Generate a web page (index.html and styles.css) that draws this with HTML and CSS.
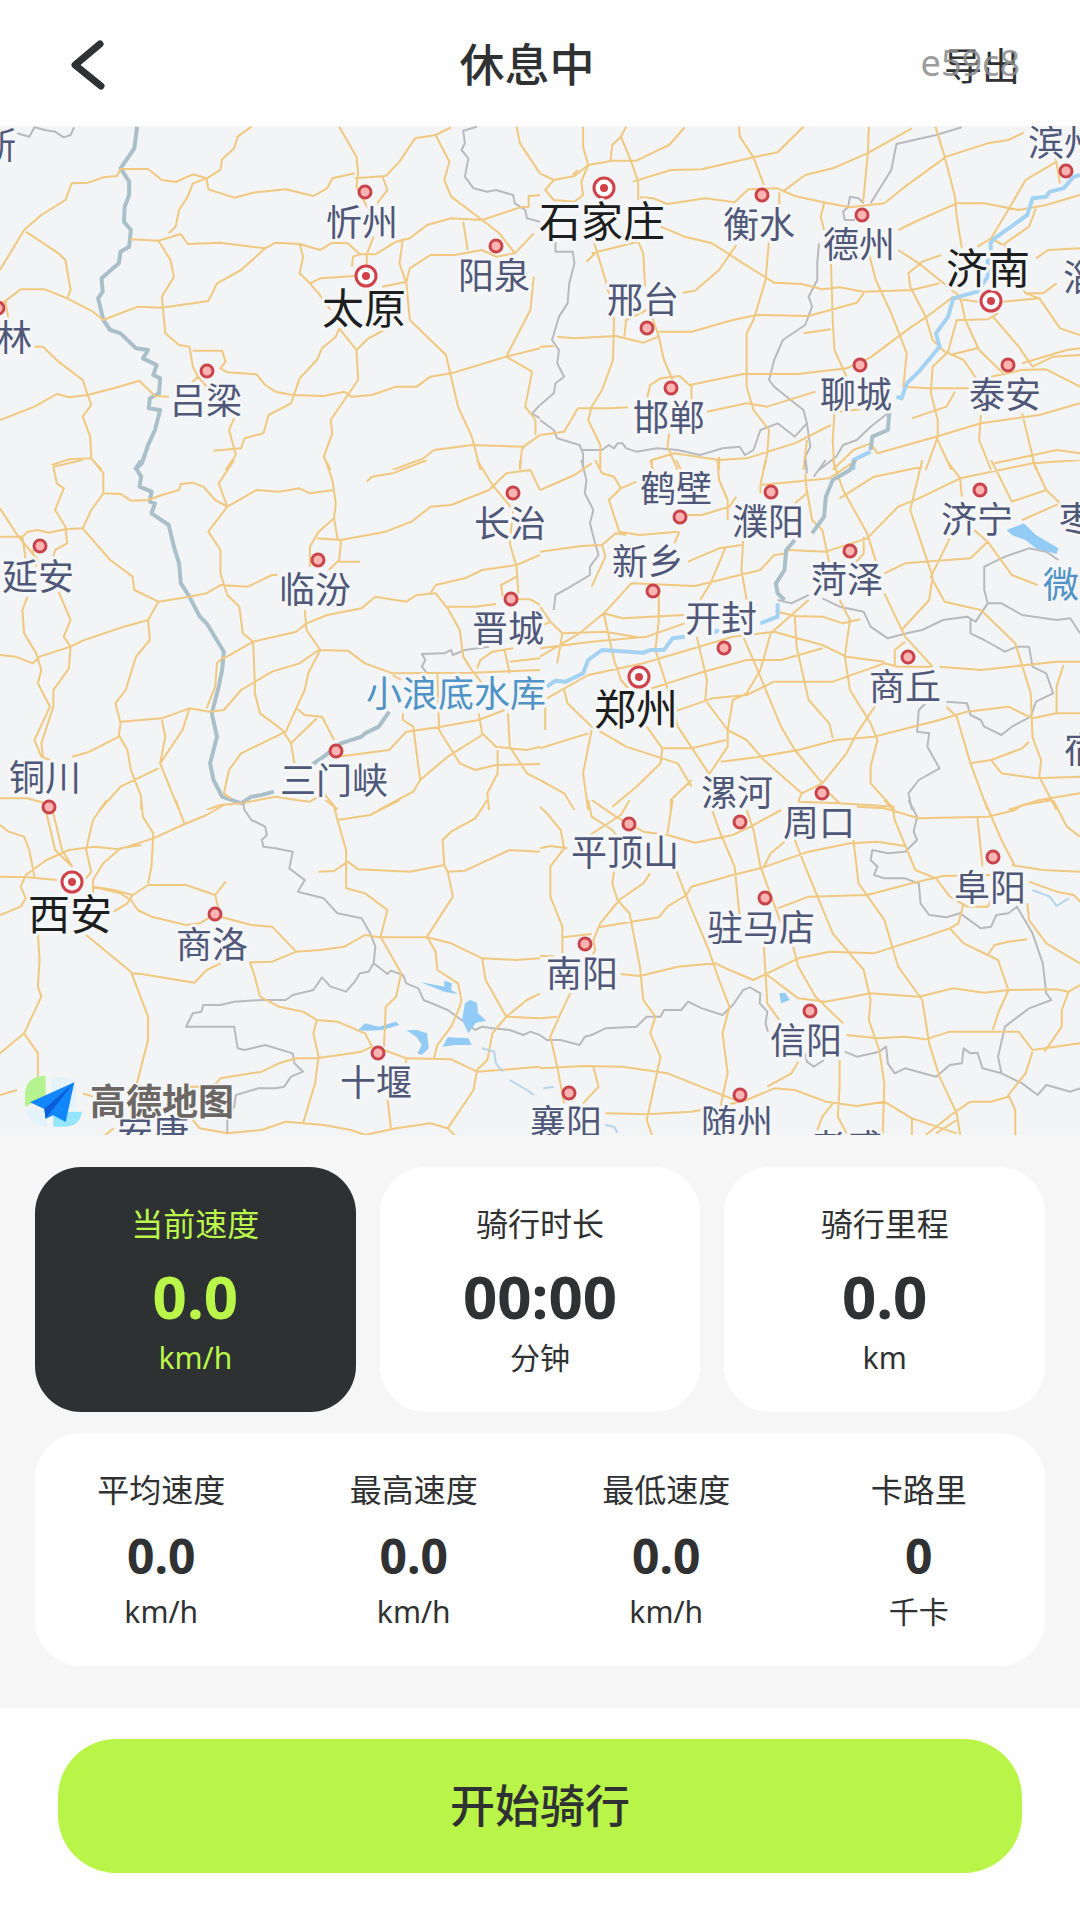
FILE: index.html
```html
<!DOCTYPE html>
<html lang="zh-CN">
<head>
    <meta charset="UTF-8">
    <meta name="viewport" content="width=device-width, initial-scale=1.0">
    <title>休息中</title>
    <link rel="stylesheet" href="styles.css">
</head>
<body>
    <div class="app">
        <!-- 顶部栏 -->
        <header class="top-bar">
            <button class="back-button" type="button" aria-label="返回">
                <svg class="back-icon" viewBox="0 0 40 56" aria-hidden="true">
                    <path d="M34 7 9 28 35 49"/>
                </svg>
            </button>
            <h1 class="title">休息中</h1>
            <div class="export">
                <button class="export-button" type="button">导出</button>
                <span class="export-mark">e59c8</span>
            </div>
        </header>

        <!-- 地图 -->
        <main>
            <svg class="map" viewBox="0 126 1080 1009" role="img" aria-label="地图">
                <rect class="land" x="0" y="126" width="1080" height="1009"/>

                <!-- 西北 -->
                <svg x="0" y="120" width="540" height="350" viewBox="0 0 1568 1050" preserveAspectRatio="none">
                    <path class="border" d="M50 40 85 50 100 22 130 30 160 35 185 52 205 45 215 22M1385 20 1345 32 1350 70 1340 90 1360 115 1350 170 1375 205 1415 215 1440 210 1490 225 1495 250 1525 270 1530 295 1568 305M1568 855 1545 880 1568 895"/>
                    <path class="river-dim" d="M398 20 390 85 350 145 375 185 375 225 362 260 360 305 380 330 375 380 350 395 345 430 295 475 298 515 285 535 300 600 320 630 350 640 395 685 430 690 415 715 455 735 445 765 465 775 462 820 435 835 432 865 465 870 450 930 430 975 412 1030 390 1050"/>
                    <path class="road" d="M0 450 70 330 120 285 190 240 208 190 255 188 300 172 340 168 350 147 430 147 470 180 510 186 560 163 600 175 640 150 645 118 680 85 690 50 730 20
                        M600 175 605 208 680 233 735 218 830 208 910 228 950 205 965 175 1030 160M1030 175 1120 168 1160 125 1205 55 1265 45 1310 22
                        M985 20 1035 110 1040 160 1035 200 1068 265M1265 45 1305 125 1290 180 1310 230 1400 300 1450 340 1495 400
                        M75 335 170 400 190 420 205 510 195 535M0 555 60 508 130 508 195 535 270 575 300 600 400 560 470 563 605 543 630 490 700 450 770 385
                        M378 358 460 362 525 342 545 372 640 368 770 385 800 368 870 372 930 390 965 368 1010 370 1045 403 1090 403 1150 365 1190 355 1240 315 1310 295 1400 300 1510 262 1535 260 1535 228 1568 226
                        M600 175 560 190 545 230 520 270 510 320 490 340M460 362 495 420 505 470 470 530 480 640 520 675 550 680 560 740 575 770 600 800
                        M560 692 645 692 655 725 640 745 660 757 745 763 770 795 800 815 850 825 940 828 1000 815M555 790 575 770
                        M985 625 975 650 935 685 920 720 870 775 845 850 780 885 765 940 710 955 700 985 620 992M680 895 665 930 685 1005 655 1050
                        M985 625 1035 690 1040 780 960 900 965 940 940 1010 960 1050M1115 630 1070 655 1035 690M870 372 880 410 870 460 900 490 925 520 960 570
                        M900 490 930 475 1030 468M1110 168 1125 210 1095 250M1085 350 1065 403 1065 440M1045 403 1025 410 1022 440
                        M1170 355 1160 430 1180 490 1190 600 1240 650 1295 705 1330 860 1370 950 1395 1050M1110 500 1180 485 1190 445 1250 405 1320 405 1400 390 1440 410 1495 400 1550 340
                        M1345 305 1358 390M1000 815 1020 830 1080 825 1150 800 1210 800 1250 770 1310 760 1390 735 1470 710 1568 685M1500 20 1510 70 1568 160
                        M1550 470 1540 570 1510 630 1470 710 1545 755 1525 860 1555 900 1555 945M1140 1050 1230 1015 1260 990 1370 975 1520 980 1568 945M1510 1050 1515 990 1530 970
                        M0 900 100 860 165 822 200 832 255 825 330 805 405 782 450 828 490 830M100 680 125 680 170 725 240 780 255 825 265 855 240 890 262 950 265 1015 295 1050
                        M150 1035 200 1018 265 1015M15 540 25 600"/>
                </svg>

                <!-- 东北 -->
                <svg x="540" y="120" width="540" height="350" viewBox="0 0 1568 1050" preserveAspectRatio="none">
                    <path class="border" d="M45 365 45 395 95 395 100 430 85 490 80 550 55 590 35 660 55 690 50 730 70 770 45 790 40 820 0 855
                        M0 900 40 930 50 955 115 975 125 1000 125 1050M120 990 180 990 200 975 215 985 225 970 240 970 250 985 280 995 340 985 400 990 465 1005 530 985 580 980 595 1005 620 990 640 930 690 910 740 950 775 910 765 870 740 850 680 800 665 780 680 720 705 660 770 615 790 560 780 530 805 480 805 430 810 370
                        M775 910 785 980 770 1010 775 1050M1225 22 1150 45 1035 72 1020 150 960 250M940 250 925 235 900 230 895 260 880 275 885 300 915 300M1010 880 960 920 920 960 880 975 860 1010 810 1050"/>
                    <path class="road" d="M0 160 40 180 100 168 140 135 210 122 280 122 340 92 375 75 420 22M125 20 125 80 140 135 120 185 125 225 100 245M95 165 110 150
                        M40 180 15 210 40 240 100 245M205 120 210 75 235 50 250 20M235 50 265 125 285 185 285 240M270 185 380 150 470 148 620 112 690 97 765 20
                        M578 20 580 50 620 112 650 195M290 232 330 235 370 252 480 235 565 247 605 208 690 205 740 228 830 248 900 262 1000 250 1060 200 1180 110 1300 70 1360 60 1405 38
                        M705 215 770 165 850 145 950 100 1080 25M695 215 695 255M955 20 952 100 938 250M825 250 815 290 825 330M1148 20 1175 110 1205 230 1210 290 1225 385
                        M1040 330 1100 300 1210 250 1290 250 1390 270 1470 255 1568 225M1500 125 1410 180 1365 260 1310 355 1270 380M1440 265 1420 320 1350 370 1350 390M1310 355 1345 375M1495 100 1510 190
                        M350 320 420 350 500 370 590 430 680 488 760 492 820 508 870 502 940 515 1080 510 1160 490M150 400 285 365M135 425 160 400M155 360 190 480 210 560 215 600 212 720 180 810 150 860 140 900 175 975 175 1050
                        M285 365 300 400 305 500M415 518 450 512 520 450 570 375M665 360 655 480 620 600 600 640 600 800 620 870 665 930 660 1000 650 1050
                        M50 650 100 655 220 648 300 668 345 650M0 680 40 678M245 650 250 600 310 570M325 590 345 650 360 720 385 780M345 635 440 635 560 600 630 585 780 588 920 548 940 520
                        M435 795 590 762 750 762 890 745 960 712 1040 650 1080 620 1130 585 1200 530M310 840 320 795 350 775 405 768 440 800 440 840
                        M0 945 70 935 110 865 200 865 255 862M485 875 600 850 660 860 800 815M845 430 850 600 855 690 890 770M765 640 845 628
                        M955 400 975 480 1020 580 1065 700 1055 800 1130 805 1245 805M1040 390 1100 430 1220 530 1235 600 1275 690 1345 760
                        M1165 405 1110 425 1070 460 1075 500 1120 590 1140 660 1175 695 1230 720 1270 780M1205 535 1270 545M1345 545 1450 535 1480 580 1510 625 1568 645
                        M1230 600 1300 598 1330 580M1230 600 1210 600 1185 695 1140 740 1135 820 1155 900 1155 950 1120 1050M1190 705 1270 685M1315 590 1390 680 1430 740 1490 710 1568 705
                        M1400 730 1530 690 1568 685M1310 770 1400 750 1470 748 1568 800M1440 415 1475 390 1568 385M1395 495 1410 520 1460 520 1500 490M1410 520 1450 535
                        M375 940 370 980 400 1050M325 1050 325 1020 390 1000 520 1020 600 1015 740 970 845 915M520 1010 520 1050M855 880 850 960 855 1050M870 875 930 868
                        M850 1050 910 990 960 970 980 1000 1150 950 1280 910 1450 885 1568 850M1280 885 1275 960 1310 1050M1150 950 1195 1050M1400 880 1440 1050M1080 895 1180 860 1205 815
                        M1320 1030 1500 990 1568 1000M765 1050 775 960"/>
                    <path class="river" d="M1568 165 1550 170 1520 205 1480 215 1470 230 1430 235 1415 285 1320 355 1308 370 1310 400M1300 410 1300 470 1270 515 1200 535 1185 590 1150 640 1160 680 1100 755 1065 790 1050 835 1035 830M960 995 910 1020 910 1050"/>
                    <path class="river-dim" d="M1015 870 1010 930 965 950 960 990"/>
                </svg>

                <!-- 西 -->
                <svg x="0" y="460" width="540" height="350" viewBox="0 0 1568 1050" preserveAspectRatio="none">
                    <path class="border" d="M1420 560 1350 570 1315 585 1310 570 1290 580 1225 582 1235 600 1225 620 1240 640"/>
                    <path class="river-dim" d="M410 0 395 25 410 50 405 80 440 95 435 125 450 130 440 160 490 195 505 260 520 310 525 370 550 410 580 470 600 490 650 575 645 630 635 680 615 760 630 830 610 910 620 960 645 1010 700 1030 730 1010 760 1005 795 995
                        M905 915 940 890 990 850 1050 830 1060 820 1100 800 1130 755"/>
                    <path class="road" d="M0 145 50 225 110 300M0 230 65 230 80 215 110 210 140 218 190 208 240 205 265 150 300 100 300 40 270 0M155 20 240 0M155 20 165 70 185 85 160 150 190 200 195 250 160 270 155 290
                        M300 100 350 102 380 122 430 120 470 105 520 90 525 72 560 68 590 80 625 120 660 140 745 90 810 95 870 85 900 100 970 90
                        M680 0 635 70 660 140 605 215 640 270 640 340 660 405 695 440 705 520 735 545 740 670 740 700 755 760 820 810 845 850 855 910
                        M945 0 965 60 975 130 970 175 980 235 990 245 985 300 955 330M970 175 925 215 900 260 900 320M920 235 990 240 1120 215 1195 185 1250 140 1310 135 1420 90 1470 40 1540 30 1568 90
                        M985 305 1045 305M1065 65 1080 50 1140 40 1240 0M1385 0 1430 75 1490 150 1480 250 1500 320 1505 400M1510 0 1510 30
                        M240 205 320 300 385 350 390 390 460 425 550 410 600 400 640 375 720 380 790 345 805 345M460 425 430 480 435 540 395 590 365 690 335 730 350 790 345 825 370 870 380 930 410 1010 410 1050
                        M0 585 45 590 95 610 115 590 205 560 240 542 360 500 430 480M80 410 65 450 70 520 105 580 120 630 110 670 145 740 100 840 120 890 145 900
                        M65 230 75 300M95 270 105 320M170 395 205 480 185 530 205 560 200 625 155 690 155 740 120 850 125 890M210 890 260 875 345 830M350 785 470 775 550 745 610 755 650 750 700 690 790 635 870 610 925 570
                        M650 590 630 610 625 680 600 745M550 745 530 810 465 910 500 1000 520 1050M470 780 480 830 465 910M290 1050 350 980 460 925
                        M650 595 735 545 860 515 890 490 950 465 1050 445 1090 410 1180 425 1210 405 1265 400 1300 445 1335 510 1345 590 1370 630 1400 670
                        M1250 400 1265 375 1350 355 1400 330 1500 315 1568 285M1300 440 1380 440 1440 432M1500 350 1455 375 1460 410M1500 418 1540 418 1568 435
                        M885 450 890 510 930 570 895 640 885 690 860 745 830 815 700 880 665 930 650 1000 670 1015M925 570 1010 572 1060 610 1140 640 1370 638 1568 630
                        M860 745 885 765 935 770 970 840M845 850 920 775M980 890 1130 870 1180 815 1280 800 1390 780 1465 750M1140 645 1165 660M1270 635 1275 810 1335 910 1380 930 1440 915 1568 912
                        M1170 760 1170 780 1200 800 1220 960 1200 995 1100 1050M1220 960 1300 890 1400 825M1390 760 1400 820 1440 860 1530 870 1568 860M1475 760 1480 860 1530 940 1568 960M1445 870 1445 940 1415 1000 1420 1050
                        M1385 625 1395 600 1430 575 1490 565M1465 570 1480 640M1480 605 1568 595M0 1015 80 1015 130 1030M600 1050 640 1035 700 1030 800 1010 860 1020 900 1025 940 1000 980 1050"/>
                </svg>

                <!-- 东 -->
                <svg x="540" y="460" width="540" height="350" viewBox="0 0 1568 1050" preserveAspectRatio="none">
                    <path class="border" d="M120 0 135 60 130 100 155 150 145 190 160 250 170 285 145 320 145 345 80 385 45 405 40 450
                        M690 420 730 430 780 405M820 415 870 440 940 455 960 500 1010 535 1065 520 1110 510 1170 480 1240 470 1265 485 1300 430 1290 390 1290 320 1350 290 1420 265 1470 275 1505 300
                        M1300 430 1340 430 1400 465 1500 480 1540 475 1568 520M1250 475 1250 520 1290 540 1350 575 1385 560 1420 560 1430 620 1470 640 1490 700 1440 725 1425 770 1370 800 1340 825 1290 800 1280 780 1250 765 1240 730 1180 725
                        M1120 730 1100 750 1095 815 1130 820 1125 860 1160 925 1100 960 1070 1000 1080 1050M770 0 775 40M830 0 795 50"/>
                    <path class="road" d="M0 90 100 45 150 10M160 0 180 40 215 50 235 85 200 120 230 215 290 225 400 215M235 85 280 65M320 0 335 50M395 0 420 50M425 165 470 165 550 140 570 110
                        M515 0 520 60 545 120 545 180M655 0 640 75 640 100M640 75 740 65 840 55 920 0M770 40 775 100 740 130M775 90 790 180 820 210 840 310
                        M850 0 880 90 950 220 980 320M870 115 970 50 1110 20M1110 0 1075 150 1140 350 1130 420 1050 510M1000 340 1060 310 1250 295 1300 245 1260 210
                        M720 270 830 275 950 235 1040 140 1100 115 1220 55 1430 10 1568 0M1180 0 1220 55 1225 110M1310 0 1370 125 1470 90 1430 0M1470 90 1510 130 1400 180M940 230 940 280 915 310
                        M1190 235 1135 350 1175 425 1280 450 1380 550 1425 700 1430 830 1440 860 1455 900 1450 950 1500 1050M1300 245 1370 345 1445 375
                        M0 275 120 258 180 255 220 220 250 225M180 255 190 290 150 380M405 215 390 250M265 370 450 378 640 330 680 285 720 280M265 370 190 455 115 520 0 590
                        M430 305 520 265 585 255M590 240 585 330 600 420M540 260 495 370 465 420M0 500 30 485 65 520 50 610M30 485 0 440
                        M65 520 190 515 300 535M185 460 240 475 420 465M0 565 150 545 310 530 420 490M185 460 215 600 235 660 260 690M345 400 345 480 335 570 375 700 400 800 490 940
                        M20 715 140 645 300 610 560 530 680 515 820 555 890 590 1000 605M310 690 460 640 600 600 700 600 820 565M390 755 500 715 600 705 680 665 850 665 1000 610 1040 620
                        M455 530 485 660 480 720 545 810 545 860 490 945M590 530 640 650 700 800 740 870 820 970M780 420 670 520 640 630 600 700 560 720 545 810
                        M740 470 745 560 780 720 840 790 850 835M690 455 740 468 820 470 880 490 930 478M870 420 900 480 885 590 900 690 960 790 980 840 960 920 960 970 1030 1050
                        M1000 400 1060 530 1140 620M1180 740 1210 770 1250 910 1300 1050M1160 620 1280 630 1500 605 1568 605M1030 620 1030 570 1060 545M1040 620 1140 620
                        M975 735 920 820 890 880 820 970 760 1000 750 1025M525 905 640 890 750 870 860 840 970 830 1160 780 1240 755 1360 740 1430 775 1500 760 1568 760
                        M1520 615 1500 680 1500 760M1420 845 1400 865 1310 900 1250 910M1310 900 1340 940 1440 955 1568 950M70 690 80 730 150 800 250 860 400 910 440 980M0 865 140 820M150 810 125 940 140 1050
                        M310 800 355 865 440 865 540 840M355 865 350 910 280 980 210 1040M15 730 15 810M545 810 600 840 650 900 760 1000M870 1030 1030 1040M0 960 70 1000 100 1050
                        M750 1025 870 1030 840 1000M1360 1050 1450 1020 1568 1000M440 960 380 1020 380 1050"/>
                    <path class="river-dim" d="M915 0 900 30 850 60 830 110 825 170 790 220M740 240 715 270 710 330 685 370 690 400 710 420"/>
                    <path class="river" d="M690 430 690 470 640 490M520 510 500 520M420 530 385 535 360 570 320 570 300 578 180 570 140 600 125 640 75 665 45 662 20 680"/>
                    <path class="lake" d="M1355 210 1405 190 1440 225 1505 265 1500 282 1440 265 1410 240 1370 225Z"/>
                </svg>

                <!-- 西南 -->
                <svg x="0" y="800" width="540" height="340" viewBox="0 0 1568 1020" preserveAspectRatio="none">
                    <path class="border" d="M705 0 710 30 730 60 755 72 770 80 775 105 760 120 765 140 800 145 850 155 840 205 885 240 865 275 940 295 980 340 1050 355 1075 400 1090 440 1085 490 1125 522 1135 512 1170 525 1180 550 1215 565 1230 600 1300 630 1380 690 1400 680 1430 685 1480 690 1520 705 1540 695 1568 705
                        M1085 490 1070 515 1045 520 1030 545 1005 575 960 560 935 532 910 570 850 585 830 600 760 600 680 605 640 615 590 615 585 635 560 640 540 680 620 680 680 680 690 745 710 750 770 735 850 760 855 790 880 815 845 830 825 860 800 865 750 865 685 885 680 920 660 950 660 1000"/>
                    <path class="lake" d="M1350 610 1365 600 1385 608 1388 640 1412 662 1382 668 1360 700 1342 660ZM1220 546 1290 560 1290 542 1312 550 1310 570 1330 582 1290 575ZM1040 690 1060 670 1100 680 1150 665 1160 675 1110 690 1060 692ZM1180 690 1210 690 1240 700 1245 745 1225 765 1212 760 1225 735 1210 712ZM1285 740 1300 712 1360 715 1370 735 1320 735Z"/>
                    <path class="road" d="M0 75 25 95 70 110 85 150 100 230M135 40 160 150 210 200M155 40 180 150 210 200M310 0 270 60 250 150 265 215 250 235M410 0 415 50 445 100 440 200 430 250
                        M0 230 80 232 165 240M0 345 60 320 75 295 60 260 75 225 135 180 200 150 275 140 345 148 445 115 530 75 600 45 650 15M510 0 535 70M410 135 350 145 300 190 270 240 270 280
                        M270 260 330 270 385 285 430 255 540 255 625 285 655 245M625 285 635 330M270 260 350 280 380 300 400 330 440 350 540 375 580 370 620 345 730 375 790 380 860 455 930 450 1000 440 1060 405 1100 412 1240 412 1310 430 1400 475 1500 480 1568 475M330 335 370 310 385 285
                        M110 400 115 480 110 560 120 590 70 700 0 760M70 700 110 760 110 830M250 405 380 515 430 650 430 720 395 860M380 520 410 522 565 548 600 510 640 490
                        M725 485 740 530 755 590 810 620 880 635 920 660 980 665 1060 700 1080 740 1050 755 920 775M725 487 790 485 860 455M920 660 910 700 925 770 915 850 880 970
                        M0 885 50 870M540 860 620 860 640 835 760 815 810 790 860 775 920 775M560 960 580 985 660 1000 760 990 830 965 940 975 1020 990 1060 1005 1150 985 1250 970 1300 985 1375 870 1385 810M240 880 270 890M300 1010 330 985
                        M970 20 980 60 1005 150 1005 265 1060 280 1125 330 1105 410 1165 520 1150 590 1120 620 1115 740M945 0 970 20M980 60 1075 45 1160 0M925 215 970 213 1010 185 1040 208 1190 215 1290 195 1285 120 1310 95 1380 55 1415 0
                        M1290 195 1300 215 1350 212 1480 150 1568 155M1300 215 1315 290 1240 410 1265 455 1270 510 1330 550 1340 600 1335 620 1310 680 1270 735 1260 775
                        M1400 475 1410 540 1470 650 1530 600 1568 580M1470 650 1568 655M1470 650 1430 700 1415 780 1385 810M1115 750 1180 775 1310 778 1385 815 1480 808 1568 800M1125 895 1135 985M1300 985 1320 1005M1180 775 1178 790"/>
                    <path class="stream" d="M1400 745 1435 755 1440 790 1460 815M1480 840 1530 870 1550 885"/>
                </svg>

                <!-- 东南 -->
                <svg x="540" y="800" width="540" height="340" viewBox="0 0 1568 1020" preserveAspectRatio="none">
                    <path class="border" d="M0 705 20 720 60 720 115 735 130 710 150 705 190 685 280 680 310 650 350 650 360 630 410 630 430 605 470 625 530 645 560 615 590 570 610 562 640 580 638 610 660 635 655 670 662 695
                        M770 760 775 785 795 800 825 780M885 755 920 770 985 755 1005 740 1010 790 1030 820 1060 805 1150 830 1190 795 1225 790 1230 745 1250 760 1270 758 1285 805 1340 820 1330 770 1350 680 1420 625 1485 600 1470 580 1460 490 1430 400 1385 320 1360 340 1325 345 1310 380 1280 385 1220 340 1180 352 1130 345 1105 310 1100 250 1060 235 1000 235 970 225 980 200 960 180 965 150 1010 160 1060 155 1095 120 1085 95 1095 50 1070 0
                        M1340 820 1400 850 1445 885 1470 855 1540 875 1568 865"/>
                    <path class="road" d="M0 20 20 40 60 90 70 145 30 200 30 290 65 380 65 460M0 145 30 138 80 145M140 0 150 50 210 90 225 110M150 0 220 50 300 95 370 105 450 128 560 105 620 75 700 30M260 0 235 45 145 105M385 0 370 100
                        M320 220 300 250 230 300 175 370 155 420 160 450 145 480M65 412 150 402M215 215 210 250 225 300 260 340 290 500 300 600 335 650 320 700 350 770 310 960 325 1005
                        M395 210 425 290 490 450 520 540 550 620 530 700 545 820 525 915M170 382 345 352 370 320 425 285 440 260 560 225 640 205 780 155 900 130 980 125 1060 138
                        M500 30 520 90 565 200 580 350M600 30 620 90 640 200 700 370M0 468 40 468M235 522 290 528 400 500 510 490 550 510 620 540 660 520 750 475 840 455 970 460 1120 410 1190 385
                        M650 440 660 610 695 660M735 440 750 500 800 590 880 670M660 525 750 595 830 605 960 580 1100 590 1200 565 1290 578 1360 570 1500 568 1535 575 1568 555
                        M690 325 780 290 950 285 1080 250 1170 228 1310 225M740 120 770 200 850 400 940 510 960 600 955 660 985 750 1000 850 995 1005M910 120 925 250 1000 360 1040 500 1110 600 1130 730 1160 830 1210 940 1220 1005
                        M650 200 670 160 710 125M920 20 1000 25 1100 55 1300 50 1380 30 1400 15 1490 0M1000 0 1025 30 1030 60 1070 160 1090 210 1150 235 1190 290 1240 320 1300 320 1310 300
                        M1290 0 1340 120 1380 200M1270 50 1285 200M1490 0 1530 80 1568 110M1370 195 1460 210 1568 215M1420 245 1500 275 1550 285 1568 305M1415 310 1420 360 1470 430 1568 490
                        M1230 310 1215 370 1190 385 1230 430 1300 465 1330 480 1360 570 1330 640 1315 690M1300 465 1320 435 1360 425 1415 418M1535 575 1515 630 1515 680 1465 755
                        M890 705 980 715 1060 710 1120 718 1190 695 1390 695 1430 750 1568 730M1430 755 1410 820 1360 885 1380 930 1380 1005M90 575 60 640 30 710 50 800 70 910M0 655 50 650
                        M0 805 130 798 240 800 370 820 480 865 580 905M155 800 170 860 125 910M190 940 310 943 440 935 520 920 600 900 680 865 740 870 830 905 920 918 1000 905 1080 955 1210 1000
                        M660 860 730 820 750 785M870 780 870 860 865 950 890 1000M850 910 820 950 805 990M1120 1005 1200 940 1250 905 1310 905 1360 890M1080 955 1080 1005M1150 1000 1210 960"/>
                    <path class="lake" d="M695 580 712 578 725 600 700 610Z"/>
                    <path class="stream" d="M1430 270 1480 290 1500 318 1535 295M190 975 215 980 225 998M10 865 40 860"/>
                </svg>

                <!-- 城市 -->
                <g class="city-dot">
                    <circle cx="365" cy="192" r="6"/><circle cx="496" cy="246" r="6"/><circle cx="762" cy="195" r="6"/><circle cx="862" cy="215" r="6"/>
                    <circle cx="1066" cy="171" r="6"/><circle cx="647" cy="328" r="6"/><circle cx="671" cy="388" r="6"/><circle cx="860" cy="365" r="6"/>
                    <circle cx="1008" cy="365" r="6"/><circle cx="207" cy="371" r="6"/><circle cx="-2" cy="308" r="6"/><circle cx="513" cy="493" r="6"/>
                    <circle cx="318" cy="560" r="6"/><circle cx="511" cy="599" r="6"/><circle cx="40" cy="546" r="6"/><circle cx="680" cy="517" r="6"/>
                    <circle cx="771" cy="492" r="6"/><circle cx="653" cy="591" r="6"/><circle cx="724" cy="648" r="6"/><circle cx="850" cy="551" r="6"/>
                    <circle cx="980" cy="490" r="6"/><circle cx="908" cy="657" r="6"/><circle cx="336" cy="751" r="6"/><circle cx="49" cy="807" r="6"/>
                    <circle cx="215" cy="914" r="6"/><circle cx="740" cy="822" r="6"/><circle cx="822" cy="793" r="6"/><circle cx="629" cy="824" r="6"/>
                    <circle cx="765" cy="898" r="6"/><circle cx="993" cy="857" r="6"/><circle cx="585" cy="944" r="6"/><circle cx="810" cy="1011" r="6"/>
                    <circle cx="378" cy="1053" r="6"/><circle cx="569" cy="1093" r="6"/><circle cx="740" cy="1095" r="6"/>
                </g>
                <g class="capital-ring">
                    <circle cx="366" cy="276" r="10"/><circle cx="604" cy="188" r="10"/><circle cx="991" cy="301" r="10"/><circle cx="639" cy="677" r="10"/><circle cx="72" cy="882" r="10"/>
                </g>
                <g class="capital-core">
                    <circle cx="366" cy="276" r="4"/><circle cx="604" cy="188" r="4"/><circle cx="991" cy="301" r="4"/><circle cx="639" cy="677" r="4"/><circle cx="72" cy="882" r="4"/>
                </g>
                <g class="city-name">
                    <text x="-56" y="159">鄂尔多斯</text>
                    <text x="362" y="236">忻州</text>
                    <text x="494" y="289">阳泉</text>
                    <text x="759" y="238">衡水</text>
                    <text x="859" y="258">德州</text>
                    <text x="1064" y="156">滨州</text>
                    <text x="1099" y="291">淄博</text>
                    <text x="643" y="313">邢台</text>
                    <text x="669" y="431">邯郸</text>
                    <text x="856" y="408">聊城</text>
                    <text x="1005" y="408">泰安</text>
                    <text x="206" y="414">吕梁</text>
                    <text x="-4" y="351">榆林</text>
                    <text x="510" y="537">长治</text>
                    <text x="315" y="603">临汾</text>
                    <text x="508" y="642">晋城</text>
                    <text x="38" y="590">延安</text>
                    <text x="676" y="502">鹤壁</text>
                    <text x="768" y="535">濮阳</text>
                    <text x="648" y="575">新乡</text>
                    <text x="721" y="632">开封</text>
                    <text x="847" y="593">菏泽</text>
                    <text x="977" y="533">济宁</text>
                    <text x="1095" y="533">枣庄</text>
                    <text x="905" y="700">商丘</text>
                    <text x="334" y="794">三门峡</text>
                    <text x="45" y="791">铜川</text>
                    <text x="212" y="958">商洛</text>
                    <text x="1100" y="763">宿州</text>
                    <text x="737" y="806">漯河</text>
                    <text x="819" y="836">周口</text>
                    <text x="625" y="866">平顶山</text>
                    <text x="761" y="941">驻马店</text>
                    <text x="990" y="901">阜阳</text>
                    <text x="582" y="987">南阳</text>
                    <text x="806" y="1054">信阳</text>
                    <text x="376" y="1096">十堰</text>
                    <text x="566" y="1136">襄阳</text>
                    <text x="737" y="1136">随州</text>
                    <text x="153" y="1146">安康</text>
                    <text x="846" y="1161">孝感</text>
                </g>
                <g class="water-name">
                    <text x="456" y="707">小浪底水库</text>
                    <text x="1097" y="598">微山湖</text>
                </g>
                <g class="capital-name">
                    <text x="364" y="324">太原</text>
                    <text x="602" y="237">石家庄</text>
                    <text x="988" y="284">济南</text>
                    <text x="636" y="725">郑州</text>
                    <text x="70" y="930">西安</text>
                </g>

                <!-- 地图标志 -->
                <svg x="0" y="1060" width="300" height="90" viewBox="0 0 900 270">
                    <path fill="#e4f2fa" d="M155 50H180Q225 50 228 80V150H155ZM75 150H140V200Q90 195 75 150Z"/>
                    <path fill="#b5f391" d="M75 140V98Q80 47 137 47V110Z"/>
                    <path fill="#93e6fb" d="M160 155H246Q240 200 190 200H160Z"/>
                    <path fill="#1187fb" d="M90 127 223 67 197 186 160 166 137 176 133 147Z"/>
                    <path fill="#0a5fd8" d="M133 147 223 67 152 156 137 176Z"/>
                </svg>
                <text class="map-brand" x="162" y="1115">高德地图</text>
            </svg>
        </main>

        <!-- 骑行数据 -->
        <section class="stats">
            <div class="cards">
                <div class="card stat active">
                    <span class="stat-label">当前速度</span>
                    <strong class="stat-value">0.0</strong>
                    <span class="stat-unit">km/h</span>
                </div>
                <div class="card stat">
                    <span class="stat-label">骑行时长</span>
                    <strong class="stat-value">00:00</strong>
                    <span class="stat-unit">分钟</span>
                </div>
                <div class="card stat">
                    <span class="stat-label">骑行里程</span>
                    <strong class="stat-value">0.0</strong>
                    <span class="stat-unit">km</span>
                </div>
            </div>
            <div class="card summary">
                <div class="stat">
                    <span class="stat-label">平均速度</span>
                    <strong class="stat-value">0.0</strong>
                    <span class="stat-unit">km/h</span>
                </div>
                <div class="stat">
                    <span class="stat-label">最高速度</span>
                    <strong class="stat-value">0.0</strong>
                    <span class="stat-unit">km/h</span>
                </div>
                <div class="stat">
                    <span class="stat-label">最低速度</span>
                    <strong class="stat-value">0.0</strong>
                    <span class="stat-unit">km/h</span>
                </div>
                <div class="stat">
                    <span class="stat-label">卡路里</span>
                    <strong class="stat-value">0</strong>
                    <span class="stat-unit">千卡</span>
                </div>
            </div>
        </section>

        <footer class="footer">
            <button class="start-button" type="button">开始骑行</button>
        </footer>
    </div>
</body>
</html>
```
FILE: styles.css
```css
* {
    box-sizing: border-box;
}

body {
    margin: 0;
    font-family: "Noto Sans", "Noto Sans CJK SC", sans-serif;
    background-color: #fefefe;
    color: #303132;
}

button {
    border: none;
    background: none;
    padding: 0;
    font-family: inherit;
    color: inherit;
    cursor: pointer;
}

.app {
    display: flex;
    flex-direction: column;
    min-height: 100vh;
}

/* 顶部栏 */
.top-bar {
    display: flex;
    justify-content: space-between;
    align-items: center;
    height: 126px;
    padding: 4px 60px 0;
}

.back-button {
    width: 80px;
    height: 56px;
    padding-left: 6px;
    text-align: left;
}

.back-icon {
    display: block;
    width: 40px;
    height: 56px;
    fill: none;
    stroke: #303132;
    stroke-width: 7;
    stroke-linecap: round;
    stroke-linejoin: round;
}

.title {
    margin: 0;
    font-size: 45px;
    font-weight: 500;
    line-height: 60px;
}

.export {
    position: relative;
    width: 106px;
    text-align: right;
}

.export-button {
    font-size: 38px;
    line-height: 56px;
}

.export-mark {
    position: absolute;
    right: 0;
    top: 0;
    font-size: 36px;
    line-height: 52px;
    color: #8c8c8c;
    opacity: 0.85;
    pointer-events: none;
}

/* 地图 */
.map {
    display: block;
    width: 100%;
    height: auto;
}

.land {
    fill: #f3f4f5;
}

.road,
.border,
.river,
.river-dim,
.stream {
    fill: none;
    stroke-linejoin: round;
    vector-effect: non-scaling-stroke;
}

.road {
    stroke: #f0c880;
    stroke-width: 2px;
}

.border {
    stroke: #b8babd;
    stroke-width: 2px;
}

.river {
    stroke: #a3d2f2;
    stroke-width: 4px;
}

.river-dim {
    stroke: #a9bfca;
    stroke-width: 4px;
}

.stream {
    stroke: #b4d5ec;
    stroke-width: 2px;
}

.lake {
    fill: #92cbf5;
}

.city-dot {
    fill: #fbb4b2;
    stroke: #c8434a;
    stroke-width: 3px;
}

.capital-ring {
    fill: #fff;
    stroke: #d0414a;
    stroke-width: 3px;
}

.capital-core {
    fill: #d0414a;
}

.city-name,
.water-name,
.capital-name,
.map-brand {
    font-size: 36px;
    text-anchor: middle;
    paint-order: stroke;
    stroke: #f5f6f7;
    stroke-width: 6px;
    stroke-linejoin: round;
}

.city-name {
    fill: #50587a;
}

.water-name {
    fill: #5093c6;
}

.capital-name {
    font-size: 42px;
    fill: #1d1e20;
}

.map-brand {
    font-weight: 700;
    fill: #6c6765;
    stroke-width: 3px;
}

/* 骑行数据 */
.stats {
    flex-grow: 1;
    display: flex;
    flex-direction: column;
    gap: 21px;
    padding: 32px 35px 41px;
    background-color: #f6f6f7;
}

.cards {
    display: grid;
    grid-template-columns: repeat(3, 1fr);
    gap: 24px;
}

.card {
    padding: 35px 0 32px;
    border-radius: 46px;
    background-color: #fff;
}

.card.active {
    background-color: #2e3132;
    color: #baf64a;
}

.summary {
    display: grid;
    grid-template-columns: repeat(4, 1fr);
}

.stat {
    display: flex;
    flex-direction: column;
    align-items: center;
}

.stat-label {
    font-size: 32px;
    line-height: 44px;
}

.stat-value {
    margin: 14px 0 4px;
    font-size: 60px;
    font-weight: 700;
    line-height: 72px;
}

.summary .stat-value {
    font-size: 48px;
    line-height: 60px;
}

.stat-unit {
    font-size: 30px;
    line-height: 44px;
}

/* 底部按钮 */
.footer {
    padding: 31px 58px 47px;
}

.start-button {
    display: block;
    width: 100%;
    padding: 37px 0;
    border-radius: 58px;
    background-color: #b9f548;
    font-size: 45px;
    font-weight: 500;
    line-height: 60px;
}
```
